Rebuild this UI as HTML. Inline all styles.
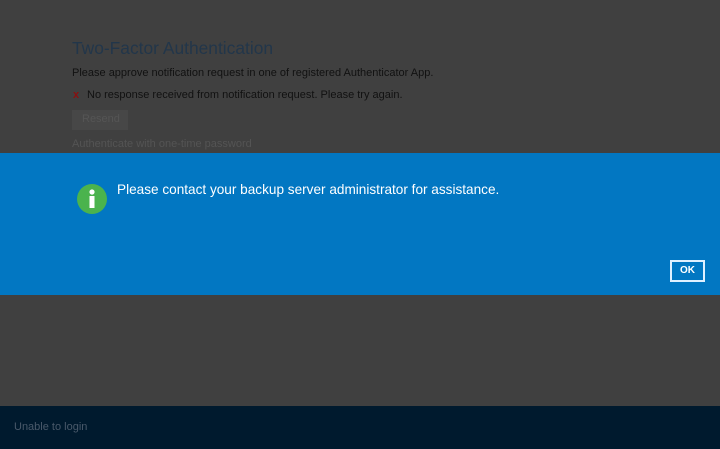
<!DOCTYPE html>
<html><head><style>
body{margin:0;width:720px;height:449px;background:#404040;font-family:"Liberation Sans",sans-serif;position:relative;overflow:hidden}
.a{position:absolute;white-space:nowrap}
</style></head><body>
<div class="a" style="left:72px;top:38px;font-size:17.4px;color:#22364a">Two-Factor Authentication</div>
<div class="a" style="left:72px;top:67px;font-size:11px;color:#111">Please approve notification request in one of registered Authenticator App.</div>
<div class="a" style="left:73px;top:89px;font-size:11px;color:#8b1010;font-weight:bold">x</div>
<div class="a" style="left:87px;top:89px;font-size:11px;color:#111">No response received from notification request. Please try again.</div>
<div class="a" style="left:72px;top:110px;width:56px;height:20px;background:#474747"></div>
<div class="a" style="left:82px;top:113px;font-size:11px;color:#555">Resend</div>
<div class="a" style="left:72px;top:138px;font-size:11px;color:#545454">Authenticate with one-time password</div>
<div class="a" style="left:0;top:153px;width:720px;height:142px;background:#0277c2"></div>
<svg class="a" style="left:76px;top:183px" width="32" height="32"><circle cx="16" cy="16" r="15" fill="#4bb34d"/><circle cx="16" cy="9" r="2.6" fill="#fff"/><rect x="13.5" y="13" width="5" height="12" fill="#fff"/></svg>
<div class="a" style="left:117px;top:182px;font-size:13.6px;color:#fff">Please contact your backup server administrator for assistance.</div>
<div class="a" style="left:670px;top:260px;width:31px;height:18px;border:2px solid #e0f0ff;color:#fff;font-size:10px;font-weight:bold;text-align:center;line-height:18px">OK</div>
<div class="a" style="left:0;top:406px;width:720px;height:43px;background:#001a2e"></div>
<div class="a" style="left:14px;top:421px;font-size:11px;color:#49596a">Unable to login</div>
</body></html>
